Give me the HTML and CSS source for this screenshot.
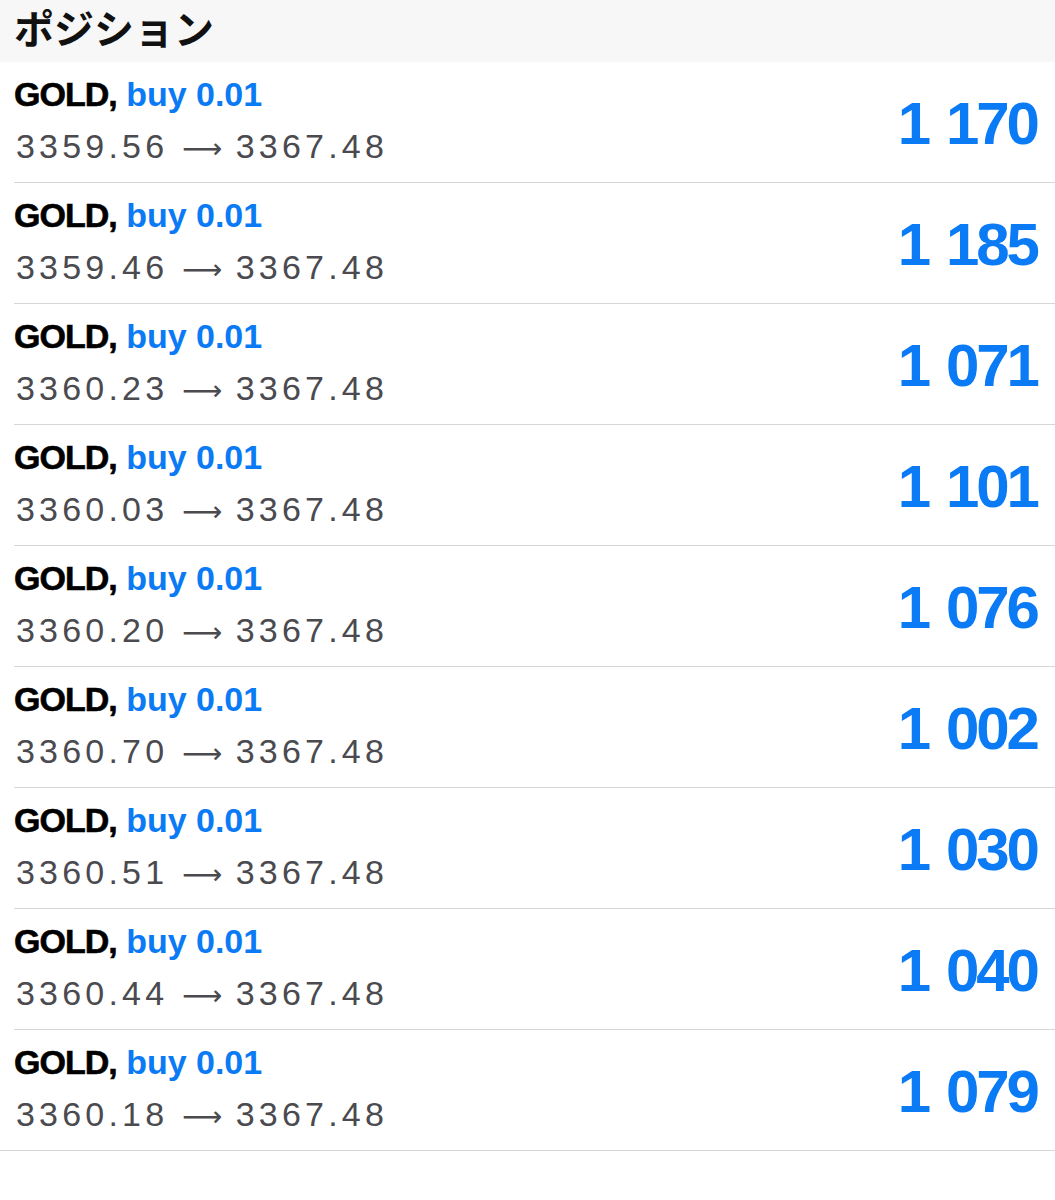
FILE: index.html
```html
<!DOCTYPE html>
<html lang="ja">
<head>
    <meta charset="UTF-8">
    <meta name="viewport" content="width=device-width, initial-scale=1.0">
    <title>ポジション</title>
    <link rel="stylesheet" href="styles.css">
</head>
<body>
    <div class="section-header">ポジション</div>
    <div id="positionList" class="position-list"></div>

    <script>
        const positionList = document.getElementById('positionList');
        const positions = [
            { open: '3359.56', profit: '1 170' },
            { open: '3359.46', profit: '1 185' },
            { open: '3360.23', profit: '1 071' },
            { open: '3360.03', profit: '1 101' },
            { open: '3360.20', profit: '1 076' },
            { open: '3360.70', profit: '1 002' },
            { open: '3360.51', profit: '1 030' },
            { open: '3360.44', profit: '1 040' },
            { open: '3360.18', profit: '1 079' }
        ];
        const current = '3367.48';

        positionList.innerHTML = positions.map(p => `
            <div class="position">
                <div class="position-info">
                    <div class="position-title"><span class="symbol">GOLD,</span> <span class="side">buy 0.01</span></div>
                    <div class="position-prices">${p.open} <span class="arrow">⟶</span> ${current}</div>
                </div>
                <div class="position-profit">${p.profit}</div>
            </div>
        `).join('');
    </script>
</body>
</html>
```

FILE: styles.css
```css
body {
    margin: 0;
    background-color: #fff;
    font-family: "Liberation Sans", Arial, sans-serif;
}
.section-header {
    height: 62px;
    line-height: 54px;
    padding-left: 14px;
    background-color: #f7f7f7;
    font-family: "Noto Sans CJK JP", sans-serif;
    font-size: 40px;
    font-weight: bold;
    color: #111;
}
.position {
    display: flex;
    align-items: center;
    height: 120px;
    margin-left: 14px;
    padding-right: 18px;
    border-bottom: 1px solid #d6d6d6;
}
.position:last-child {
    margin-left: 0;
    padding-left: 14px;
}
.position-info {
    flex: 1;
    padding-bottom: 4px;
}
.position-title {
    font-size: 34px;
    font-weight: bold;
    line-height: 40px;
    margin-bottom: 12px;
}
.symbol {
    color: #000;
    letter-spacing: -1px;
    -webkit-text-stroke: 0.6px #000;
}
.side {
    color: #0a7af5;
}
.position-prices {
    padding-left: 2px;
    font-size: 34px;
    line-height: 40px;
    letter-spacing: 4.2px;
    color: #4a4a4f;
}
.arrow {
    font-family: "DejaVu Sans", sans-serif;
    font-size: 28px;
    letter-spacing: 0;
    line-height: 0;
}
.position-profit {
    margin-top: 3px;
    font-size: 60px;
    font-weight: bold;
    letter-spacing: -3px;
    word-spacing: 4px;
    color: #0a7af5;
}
```
